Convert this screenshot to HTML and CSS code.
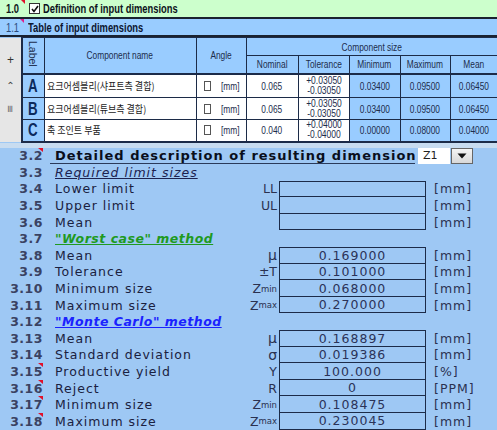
FILE: index.html
```html
<!DOCTYPE html>
<html>
<head>
<meta charset="utf-8">
<link rel="stylesheet" href="styles.css">
</head>
<body>
<div class="s1">
  <span class="n10"><span class="sq">1.0</span><i class="tri"></i></span>
  <span class="cb"><svg width="8" height="8" viewBox="0 0 8 8"><path d="M1 4 L3 6.5 L7 1" fill="none" stroke="#111" stroke-width="1.6"/></svg></span>
  <span class="ttl sq">Definition of input dimensions</span>
</div>
<div class="s11">
  <span class="n11"><span class="sq">1.1</span><i class="tri pink"></i></span>
  <span class="ttl sq">Table of input dimensions</span>
</div>
<table class="tbl">
  <colgroup>
    <col class="c22"><col class="c22"><col class="c152"><col class="c50">
    <col class="c52"><col class="c51"><col class="c51"><col class="c50"><col class="c47">
  </colgroup>
  <tr class="h1">
    <td class="g" rowspan="2"><span class="plus">+</span></td>
    <th class="lab" rowspan="2"><span class="vert">Label</span></th>
    <th rowspan="2"><span class="sq">Component name</span></th>
    <th rowspan="2"><span class="sq">Angle</span></th>
    <th colspan="5"><span class="sq">Component size</span></th>
  </tr>
  <tr class="h2">
    <th><span class="sq">Nominal</span></th><th><span class="sq">Tolerance</span></th><th><span class="sq">Minimum</span></th><th><span class="sq">Maximum</span></th><th><span class="sq">Mean</span></th>
  </tr>
  <tr class="r ra">
    <td class="g"><span class="up">&#x2303;</span></td>
    <td class="lab big"><span class="sq">A</span></td>
    <td class="name"><span class="kr">요크어셈블리(샤프트측 결합)</span></td>
    <td class="ang"><div class="angc"><span class="cbx"></span><span class="sq mm">[mm]</span></div></td>
    <td class="w"><span class="sq">0.065</span></td>
    <td class="w tol"><span class="sq">+0.03050<br>-0.03050</span></td>
    <td><span class="sq">0.03400</span></td><td><span class="sq">0.09500</span></td><td><span class="sq">0.06450</span></td>
  </tr>
  <tr class="r">
    <td class="g"><span class="grip">&#x2261;</span></td>
    <td class="lab big"><span class="sq">B</span></td>
    <td class="name"><span class="kr">요크어셈블리(튜브측 결합)</span></td>
    <td class="ang"><div class="angc"><span class="cbx"></span><span class="sq mm">[mm]</span></div></td>
    <td class="w"><span class="sq">0.065</span></td>
    <td class="w tol"><span class="sq">+0.03050<br>-0.03050</span></td>
    <td><span class="sq">0.03400</span></td><td><span class="sq">0.09500</span></td><td><span class="sq">0.06450</span></td>
  </tr>
  <tr class="r rc">
    <td class="g"></td>
    <td class="lab big"><span class="sq">C</span></td>
    <td class="name"><span class="kr">축 조인트 부품</span></td>
    <td class="ang"><div class="angc"><span class="cbx"></span><span class="sq mm">[mm]</span></div></td>
    <td class="w"><span class="sq">0.040</span></td>
    <td class="w tol"><span class="sq">+0.04000<br>-0.04000</span></td>
    <td><span class="sq">0.00000</span></td><td><span class="sq">0.08000</span></td><td><span class="sq">0.04000</span></td>
  </tr>
</table>
<div class="strip"></div>
<div class="s3">
  <div class="num cm">3.2</div>
  <div class="trow"><span class="title">Detailed description of resulting dimension</span><span class="z1">Z1</span><span class="dd"><svg width="10" height="6" viewBox="0 0 10 6"><path d="M0.5 0.5 H9.5 L5 5.5 Z" fill="#111"/></svg></span></div>

  <div class="num">3.3</div><div class="lbl req">Required limit sizes</div>

  <div class="num">3.4</div><div class="lbl">Lower limit</div><div class="sym">LL</div><div class="box first"></div><div class="unit">[mm]</div>
  <div class="num">3.5</div><div class="lbl">Upper limit</div><div class="sym">UL</div><div class="box"></div><div class="unit">[mm]</div>
  <div class="num">3.6</div><div class="lbl">Mean</div><div class="sym"></div><div class="box"></div><div class="unit">[mm]</div>

  <div class="num">3.7</div><div class="lbl wc">"Worst case" method</div>

  <div class="num">3.8</div><div class="lbl">Mean</div><div class="sym gr">&#x3bc;</div><div class="box first">0.169000</div><div class="unit">[mm]</div>
  <div class="num">3.9</div><div class="lbl">Tolerance</div><div class="sym">&#xb1;T</div><div class="box">0.101000</div><div class="unit">[mm]</div>
  <div class="num">3.10</div><div class="lbl">Minimum size</div><div class="sym">Z<sub>min</sub></div><div class="box">0.068000</div><div class="unit">[mm]</div>
  <div class="num">3.11</div><div class="lbl">Maximum size</div><div class="sym">Z<sub>max</sub></div><div class="box">0.270000</div><div class="unit">[mm]</div>

  <div class="num">3.12</div><div class="lbl mc">"Monte Carlo" method</div>

  <div class="num">3.13</div><div class="lbl">Mean</div><div class="sym gr">&#x3bc;</div><div class="box first">0.168897</div><div class="unit">[mm]</div>
  <div class="num">3.14</div><div class="lbl">Standard deviation</div><div class="sym gr">&#x3c3;</div><div class="box">0.019386</div><div class="unit">[mm]</div>
  <div class="num cm">3.15</div><div class="lbl">Productive yield</div><div class="sym">Y</div><div class="box">100.000</div><div class="unit">[%]</div>
  <div class="num cm">3.16</div><div class="lbl">Reject</div><div class="sym">R</div><div class="box">0</div><div class="unit">[PPM]</div>
  <div class="num cm">3.17</div><div class="lbl">Minimum size</div><div class="sym">Z<sub>min</sub></div><div class="box">0.108475</div><div class="unit">[mm]</div>
  <div class="num cm">3.18</div><div class="lbl">Maximum size</div><div class="sym">Z<sub>max</sub></div><div class="box">0.230045</div><div class="unit">[mm]</div>
</div>
</body>
</html>
```
FILE: styles.css
```css
* { box-sizing: border-box; }
html, body { margin: 0; padding: 0; }
body {
  width: 497px;
  height: 430px;
  overflow: hidden;
  background: #9ec8f4;
  font-family: "Liberation Sans", Arial, sans-serif;
  color: #14213d;
}
.sq {
  display: inline-block;
  transform: scaleX(0.76);
}
.tri {
  position: absolute;
  top: 0;
  right: 0;
  width: 0;
  height: 0;
  border-top: 4px solid #e0102a;
  border-left: 4px solid transparent;
}
.tri.pink { border-top-color: #e0208c; }

.s1 {
  height: 19px;
  background: #ccffcc;
  border-bottom: 2px solid #1a2230;
  display: flex;
  align-items: center;
  font-weight: bold;
  font-size: 13px;
}
.n10 { position: relative; margin-left: 6px; width: 19px; height: 17px; display: flex; align-items: center; color: #101820; }
.n10 .sq, .n11 .sq, .s1 .ttl, .s11 .ttl { transform-origin: left center; transform: scaleX(0.72); }
.cb {
  width: 11px;
  height: 11px;
  margin-left: 4px;
  border: 1px solid #333;
  background: #fff;
  display: flex;
  align-items: center;
  justify-content: center;
}
.s1 .ttl { margin-left: 3px; color: #0c1220; }

.s11 {
  height: 18px;
  background: #99ccff;
  border-bottom: 2px solid #1a2230;
  display: flex;
  align-items: center;
  font-size: 13px;
}
.n11 { position: relative; margin-left: 6px; width: 18px; height: 16px; display: flex; align-items: center; color: #2a4a7a; }
.s11 .ttl { margin-left: 4px; font-weight: bold; color: #0c1630; }

.tbl {
  border-collapse: collapse;
  table-layout: fixed;
  width: 497px;
  font-size: 11px;
  line-height: 12px;
}
.c22 { width: 22px; }
.c152 { width: 152px; }
.c50 { width: 50px; }
.c52 { width: 52px; }
.c51 { width: 51px; }
.c47 { width: 47px; }
.tbl th, .tbl td {
  padding: 0;
  border: 1px solid #1c2b48;
  text-align: center;
  vertical-align: middle;
  background: #99ccff;
  color: #1c2d4c;
  font-weight: normal;
  white-space: nowrap;
}
.tbl .h1 th, .tbl .h1 td { height: 18px; }
.tbl .h2 th { height: 18px; }
.tbl .r td { height: 22px; }
.tbl .ra td { height: 24px; border-top: 2px solid #1c2b48; }
.tbl .rc td { border-bottom: 2px solid #1c2b48; }
.tbl td.g {
  background: #e6e6e6;
  border: none;
  border-right: 2px solid #1c2b48;
  color: #555;
}
.tbl .lab { border-left: 2px solid #1c2b48; }
.plus { font-size: 12px; color: #333; position: relative; top: 4px; }
.up { font-size: 10px; color: #444; font-family: "DejaVu Sans", sans-serif; }
.grip { font-size: 10px; color: #666; display: inline-block; transform: rotate(90deg); font-family: "DejaVu Sans", sans-serif; }
.vert {
  writing-mode: vertical-rl;
  display: inline-block;
  font-size: 10.5px;
}
.tbl td.big {
  font-weight: bold;
  font-size: 19px;
  line-height: 18px;
  color: #0c2a5c;
}
.tbl td.big .sq { transform: scaleX(0.7); }
.tbl td.name {
  text-align: left;
  padding-left: 2px;
  background: #fff;
}
.kr {
  display: inline-block;
  transform: scaleX(0.9);
  transform-origin: left center;
  font-family: "Noto Sans CJK KR", sans-serif;
  font-size: 10px;
  line-height: 12px;
  color: #1a1a1a;
}
.tbl td.ang {
  background: #fff;
  overflow: visible;
}
.angc { display: flex; align-items: center; }
.ang .cbx {
  width: 10px;
  height: 10px;
  border: 1px solid #555;
  background: #fff;
  margin-left: 7px;
}
.ang .mm { margin-left: 10px; transform-origin: left center; color: #1c2d4c; }
.tbl td.w { background: #fff; }
.tbl td.tol { font-size: 10px; line-height: 10px; }
.tbl td.tol .sq { transform: scaleX(0.85); }

.strip { height: 5px; background: #c8dcf0; }

.s3 {
  display: grid;
  grid-template-columns: 43px 207px 29px 147px 71px;
  grid-auto-rows: 16.6px;
  font-family: "DejaVu Sans", sans-serif;
  font-size: 12.5px;
  letter-spacing: 1px;
  color: #1a2140;
  background: #9ec8f4;
}
.s3 > div { display: flex; align-items: center; white-space: nowrap; }
.num {
  grid-column: 1;
  justify-content: flex-end;
  position: relative;
  color: #3a4262;
  font-weight: bold;
  letter-spacing: 0.5px;
}
.num.cm::after {
  content: "";
  position: absolute;
  top: 0;
  right: 0;
  border-top: 4px solid #e0102a;
  border-left: 5px solid transparent;
}
.lbl { padding-left: 12px; }
.trow { grid-column: 2 / 6; }
.title {
  margin-left: 7px;
  padding-left: 5px;
  width: 365px;
  height: 100%;
  display: flex;
  align-items: center;
  border-bottom: 1px solid #2a3a5a;
  font-weight: bold;
  font-size: 13px;
  letter-spacing: 1px;
  color: #0a0f1c;
}
.z1 {
  margin-left: 3px;
  width: 32px;
  height: 16px;
  background: #fff;
  font-size: 11px;
  letter-spacing: 0;
  padding-left: 5px;
  display: flex;
  align-items: center;
  color: #222;
}
.dd {
  margin-left: 1px;
  width: 22px;
  height: 16px;
  border: 1px solid #666;
  background: linear-gradient(#f4f4f4, #d8d8d8);
  display: flex;
  align-items: center;
  justify-content: center;
}
.req { font-style: italic; text-decoration: underline; color: #1c2250; }
.wc { font-style: italic; font-weight: bold; text-decoration: underline; color: #1f9a1f; letter-spacing: 0.5px; }
.mc { font-style: italic; font-weight: bold; text-decoration: underline; color: #1a22ff; letter-spacing: 0.5px; }
.sym { justify-content: flex-end; padding-right: 2px; letter-spacing: 0; color: #2a3150; }
.sym sub { font-size: 8.5px; vertical-align: -3px; }
.sym.gr { font-size: 14px; }
.box {
  justify-content: center;
  border: 1px solid #1c2b48;
  border-top: none;
  color: #2b3358;
}
.box.first { border-top: 1px solid #1c2b48; }
.unit { padding-left: 8px; color: #2a3150; }
```
